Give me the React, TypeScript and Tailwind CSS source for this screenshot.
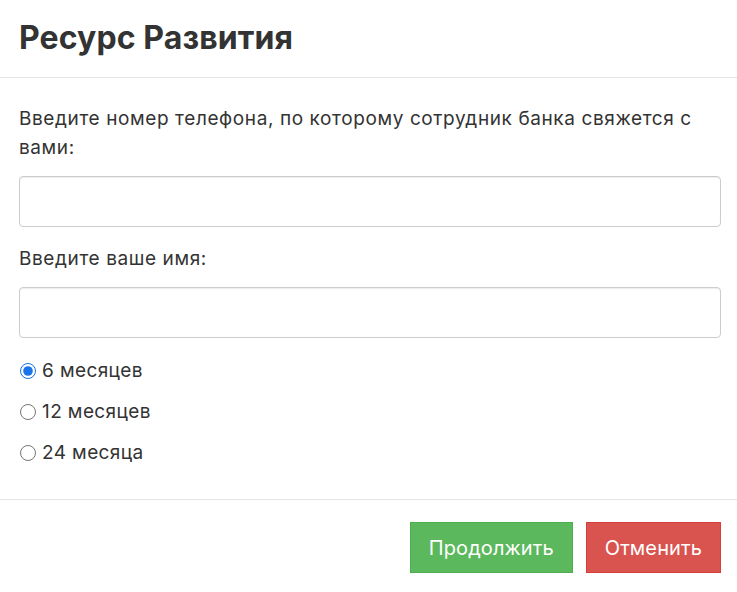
import React, { useState } from "react";

const options = ["6 месяцев", "12 месяцев", "24 месяца"];

const App = () => {
  const [term, setTerm] = useState(0);

  return (
    <div
      className="w-[737px] h-[592px] bg-white text-[#333333] flex flex-col"
      style={{ fontFamily: "Inter, 'Noto Sans', sans-serif" }}
    >
      {/* Header */}
      <div className="h-[78px] border-b border-[#e5e5e5] px-[19px] flex items-center">
        <h4 className="text-[32px] font-bold tracking-[0.1px] leading-none pb-[2px]">
          Ресурс Развития
        </h4>
      </div>

      {/* Body */}
      <div className="flex-1 pl-[19px] pr-[16px] pt-[26px] border-b border-[#e5e5e5]">
        <label className="block text-[19px] leading-[29px] tracking-[0.6px]">
          Введите номер телефона, по которому сотрудник банка свяжется с
          вами:
        </label>
        <input
          type="text"
          className="mt-[14px] block w-full h-[51px] rounded-[4px] border border-[#cccccc] px-3 shadow-[inset_0_1px_1px_rgba(0,0,0,0.075)] outline-none"
        />

        <label className="block mt-[17px] text-[19px] leading-[29px] tracking-[0.6px]">
          Введите ваше имя:
        </label>
        <input
          type="text"
          className="mt-[14px] block w-full h-[51px] rounded-[4px] border border-[#cccccc] px-3 shadow-[inset_0_1px_1px_rgba(0,0,0,0.075)] outline-none"
        />

        <div className="mt-[18px] flex flex-col gap-[12px]">
          {options.map((opt, i) => (
            <label
              key={opt}
              className="flex items-center gap-[6px] text-[19px] leading-[29px] tracking-[0.4px] cursor-pointer"
            >
              <input
                type="radio"
                name="term"
                checked={term === i}
                onChange={() => setTerm(i)}
                className="ml-[1px] w-[16px] h-[16px] m-0 accent-[#1a73e8]"
              />
              {opt}
            </label>
          ))}
        </div>
      </div>

      {/* Footer */}
      <div className="h-[92px] pl-[19px] pr-[16px] pt-[22px] flex justify-end gap-[13px]">
        <button className="h-[51px] px-[18px] bg-[#5cb85c] border border-[#4cae4c] text-white text-[20px] tracking-[0.1px]">
          Продолжить
        </button>
        <button className="h-[51px] px-[18px] bg-[#d9534f] border border-[#d43f3a] text-white text-[20px] tracking-[0.1px]">
          Отменить
        </button>
      </div>
    </div>
  );
};

export default App;
